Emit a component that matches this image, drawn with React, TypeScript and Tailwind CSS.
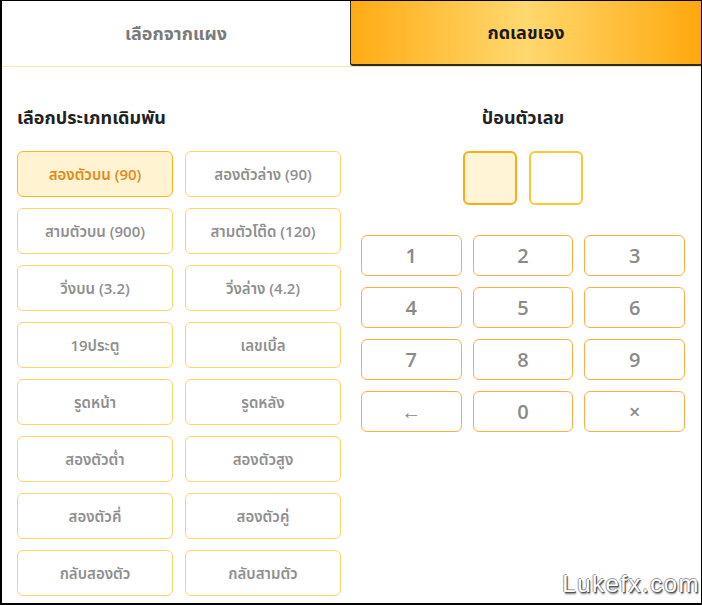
import { useState } from 'react';

const betTypes = [
  'สองตัวบน (90)',
  'สองตัวล่าง (90)',
  'สามตัวบน (900)',
  'สามตัวโต๊ด (120)',
  'วิ่งบน (3.2)',
  'วิ่งล่าง (4.2)',
  '19ประตู',
  'เลขเบิ้ล',
  'รูดหน้า',
  'รูดหลัง',
  'สองตัวต่ำ',
  'สองตัวสูง',
  'สองตัวคี่',
  'สองตัวคู่',
  'กลับสองตัว',
  'กลับสามตัว',
];

const keys = ['1', '2', '3', '4', '5', '6', '7', '8', '9', '←', '0', '×'];

const font = { fontFamily: '"Open Sans", "Noto Sans Thai", "Noto Sans", sans-serif' };

export default function App() {
  const [selected, setSelected] = useState(0);
  const [tab, setTab] = useState(1);
  const [digits, setDigits] = useState<string[]>([]);

  const press = (k: string) => {
    if (k === '←') setDigits((d) => d.slice(0, -1));
    else if (k === '×') setDigits([]);
    else setDigits((d) => (d.length < 2 ? [...d, k] : d));
  };

  return (
    <div
      className="w-[702px] h-[605px] bg-white border-l-2 border-t border-r border-b-2 border-black overflow-hidden relative"
      style={font}
    >
      {/* tabs */}
      <div className="flex h-[66px] border-b border-[#fde7a0]">
        <button
          onClick={() => setTab(0)}
          className="w-[348px] flex items-center justify-center text-[18px] font-bold text-[#7a7a7a]"
        >
          เลือกจากแผง
        </button>
        <button
          onClick={() => setTab(1)}
          className={`flex-1 flex items-center justify-center text-[18px] font-bold text-[#1a1a1a] border-l border-b-2 border-[#2a2a2a] rounded-bl-[3px] ${
            tab === 1 ? 'bg-[linear-gradient(to_right,#ffab14,#ffd86e_50%,#ffa80d)]' : 'bg-white'
          }`}
        >
          กดเลขเอง
        </button>
      </div>

      <div className="flex">
        {/* bet types */}
        <div className="w-[348px] pl-[15px] pr-[9px] pt-[38px]">
          <h2 className="text-[18px] font-bold text-[#222] leading-6 mb-[22px]">เลือกประเภทเดิมพัน</h2>
          <div className="grid grid-cols-2 gap-x-[12px] gap-y-[11px]">
            {betTypes.map((t, i) => (
              <button
                key={t}
                onClick={() => setSelected(i)}
                className={`h-[46px] rounded-[6px] border text-[15px] font-semibold ${
                  selected === i
                    ? 'bg-[#fff3d1] border-[#ffb526] text-[#e2891c]'
                    : 'bg-white border-[#ffd368] text-[#8f8f8f]'
                }`}
              >
                {t}
              </button>
            ))}
          </div>
        </div>

        {/* number pad */}
        <div className="flex-1 pl-[11px] pr-[16px] pt-[38px]">
          <h2 className="text-[18px] font-bold text-[#222] leading-6 text-center mb-[22px]">ป้อนตัวเลข</h2>
          <div className="flex justify-center gap-[12px]">
            {[0, 1].map((i) => (
              <div
                key={i}
                className={`w-[54px] h-[54px] rounded-[6px] border-2 flex items-center justify-center text-[22px] text-[#555] ${
                  i === digits.length ? 'bg-[#fff5d6] border-[#ffac14]' : 'bg-white border-[#ffc738]'
                }`}
              >
                {digits[i] ?? ''}
              </div>
            ))}
          </div>
          <div className="grid grid-cols-3 gap-x-[11px] gap-y-[11px] mt-[30px]">
            {keys.map((k) => (
              <button
                key={k}
                onClick={() => press(k)}
                className="h-[41px] rounded-[6px] border border-[#ffae45] bg-white text-[20px] text-[#8a8a8a] font-semibold"
              >
                {k}
              </button>
            ))}
          </div>
        </div>
      </div>

      <span
        className="absolute right-[1px] bottom-[1px] text-[24px] tracking-[1.5px] text-white"
        style={{
          fontFamily: '"Liberation Sans", sans-serif',
          textShadow: '1px 1px 0 #555, -1px 0 0 #999, 0 -1px 0 #999, 1px 2px 2px #666',
        }}
      >
        Lukefx.com
      </span>
    </div>
  );
}
